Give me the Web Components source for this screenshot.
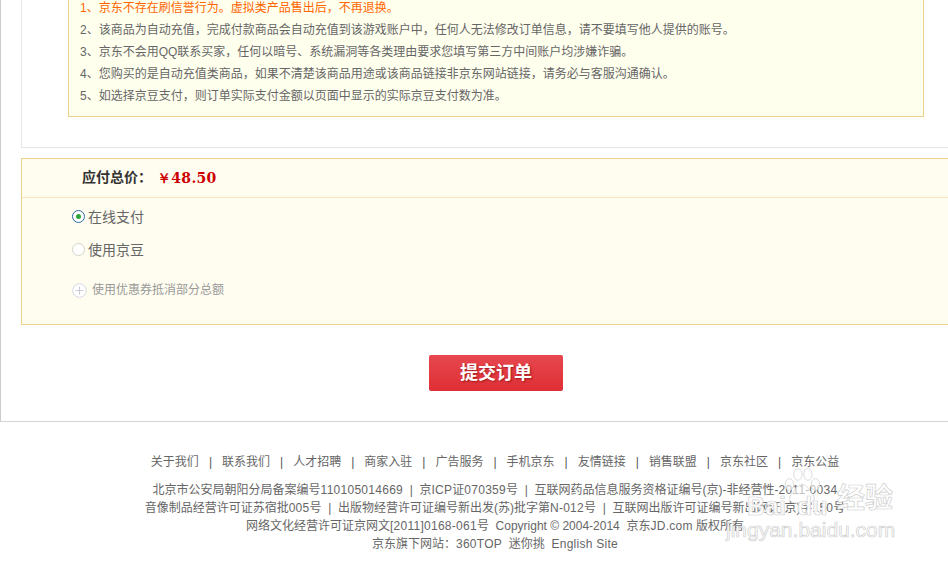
<!DOCTYPE html>
<html lang="zh">
<head>
<meta charset="utf-8">
<title>提交订单</title>
<style>
  html, body { margin: 0; padding: 0; background: #fff; overflow: hidden; }
  body { font: 12px/18px "Liberation Sans", "Noto Sans CJK SC", sans-serif; color: #666; height: 561px; }
</style>
</head>
<body>
<order-page>
  <notice-box slot="notice">
    <li class="warn">1、京东不存在刷信誉行为。虚拟类产品售出后，不再退换。</li>
    <li>2、该商品为自动充值，完成付款商品会自动充值到该游戏账户中，任何人无法修改订单信息，请不要填写他人提供的账号。</li>
    <li>3、京东不会用QQ联系买家，任何以暗号、系统漏洞等各类理由要求您填写第三方中间账户均涉嫌诈骗。</li>
    <li>4、您购买的是自动充值类商品，如果不清楚该商品用途或该商品链接非京东网站链接，请务必与客服沟通确认。</li>
    <li>5、如选择京豆支付，则订单实际支付金额以页面中显示的实际京豆支付数为准。</li>
  </notice-box>
  <pay-panel slot="pay" total="￥48.50"></pay-panel>
  <submit-button slot="submit">提交订单</submit-button>
</order-page>
<site-footer></site-footer>
<baidu-mark></baidu-mark>

<script>
// Top part of the page: frame with notice, payment panel and the button
class OrderPage extends HTMLElement {
  constructor() {
    super();
    this.attachShadow({ mode: 'open' });
    this.shadowRoot.innerHTML = `
      <style>
        :host { display: block; height: 425px; margin-top: -3px; box-sizing: border-box;
                border-left: 1px solid #ccc; border-bottom: 1px solid #d4d4d4; }
        .info { margin-left: 20px; height: 151px; box-sizing: border-box;
                border: 1px solid #e6e6e6; border-top: 0; border-right: 0; }
        .pay { margin: 10px 0 0 20px; }
        .submit { display: flex; justify-content: center; margin: 30px 0 0 43px; }
      </style>
      <div class="info"><slot name="notice"></slot></div>
      <div class="pay"><slot name="pay"></slot></div>
      <div class="submit"><slot name="submit"></slot></div>
    `;
  }
}

class NoticeBox extends HTMLElement {
  constructor() {
    super();
    this.attachShadow({ mode: 'open' });
    this.shadowRoot.innerHTML = `
      <style>
        :host { display: block; box-sizing: border-box; width: 856px; height: 120px; margin-left: 46px;
                padding-left: 11px; background: #ffffee; border: 1px solid #edd28b; border-top: 0;
                font-size: 12px; line-height: 22px; color: #666; }
        ::slotted(li) { display: block; white-space: nowrap; }
        ::slotted(.warn) { color: #ff6600; }
      </style>
      <slot></slot>
    `;
  }
}

// Payment panel: total row, radios and the coupon toggle
class PayPanel extends HTMLElement {
  constructor() {
    super();
    this.attachShadow({ mode: 'open' });
    this.shadowRoot.innerHTML = `
      <style>
        :host { display: block; box-sizing: border-box; height: 167px; background: #fffdf0;
                border: 1px solid #edd28b; border-right: 0; }
        .total { height: 39px; box-sizing: border-box; padding-left: 60px; display: flex; align-items: center;
                 border-bottom: 1px solid #f9e6bd; font-size: 14px; font-weight: bold; color: #333; }
        .label { position: relative; top: -1px; }
        .price { color: #cc0000; font: bold 14px "DejaVu Serif", serif; margin-left: 5px; letter-spacing: .3px; position: relative; top: 1px; }
        .body { padding: 2px 0 0 50px; }
        .radio { display: flex; align-items: center; height: 33px; font-size: 14px; color: #666; }
        .dot { width: 11px; height: 11px; border-radius: 50%; border: 1px solid #d6d3c8; background: #fff; margin-right: 3px; }
        .on { border-color: #2f6ba5; display: flex; align-items: center; justify-content: center; }
        .on::after { content: ""; width: 5px; height: 5px; border-radius: 50%; background: #2fa33c; }
        .coupon { display: flex; align-items: center; height: 18px; margin-top: 15px; color: #999; }
        .coupon svg { margin-right: 5px; }
      </style>
      <div class="total"><span class="label">应付总价：</span><span class="price"></span></div>
      <div class="body">
        <div class="radio"><span class="dot on"></span>在线支付</div>
        <div class="radio"><span class="dot"></span>使用京豆</div>
        <div class="coupon">
          <svg width="15" height="15" viewBox="0 0 15 15" fill="none">
            <circle cx="7.5" cy="7.5" r="6.8" fill="#fff" stroke="#d5d8e2"/>
            <path d="M7.5 3.5v8M3.5 7.5h8" stroke="#c9ccd6"/>
          </svg>使用优惠券抵消部分总额
        </div>
      </div>
    `;
  }
  connectedCallback() {
    this.shadowRoot.querySelector('.price').textContent = this.getAttribute('total');
  }
}

class SubmitButton extends HTMLElement {
  constructor() {
    super();
    this.attachShadow({ mode: 'open' });
    this.shadowRoot.innerHTML = `
      <style>
        :host { display: flex; align-items: center; justify-content: center; width: 134px; height: 36px;
                border-radius: 2px; background: linear-gradient(#e7474f, #df2f35);
                color: #fff; font-size: 18px; font-weight: bold; text-shadow: 1px 1px 2px rgba(110,0,0,.6); }
      </style>
      <slot></slot>
    `;
  }
}

class SiteFooter extends HTMLElement {
  constructor() {
    super();
    this.attachShadow({ mode: 'open' });
    const links = ['关于我们', '联系我们', '人才招聘', '商家入驻', '广告服务', '手机京东', '友情链接', '销售联盟', '京东社区', '京东公益'];
    this.shadowRoot.innerHTML = `
      <style>
        :host { display: block; padding: 31px 0 0 42px; text-align: center; color: #666; font-size: 12px; line-height: 18px; }
        nav { display: flex; justify-content: center; gap: 10px; height: 18px; margin-bottom: 10px; }
        nav i { font-style: normal; color: #555; }
        .rows div { white-space: nowrap; }
        b { font-weight: normal; letter-spacing: .27px; }
      </style>
      <nav>${links.map(l => `<span>${l}</span>`).join('<i>|</i>')}</nav>
      <div class="rows">
        <div>北京市公安局朝阳分局备案编号<b>110105014669</b>&nbsp;&nbsp;|&nbsp;&nbsp;京<b>ICP</b>证<b>070359</b>号&nbsp;&nbsp;|&nbsp;&nbsp;互联网药品信息服务资格证编号(京)-非经营性-<b>2011-0034</b></div>
        <div>音像制品经营许可证苏宿批<b>005</b>号&nbsp;&nbsp;|&nbsp;&nbsp;出版物经营许可证编号新出发(苏)批字第<b>N-012</b>号&nbsp;&nbsp;|&nbsp;&nbsp;互联网出版许可证编号新出网证(京)字<b>150</b>号</div>
        <div>网络文化经营许可证京网文<b>[2011]0168-061</b>号&nbsp;&nbsp;Copyright © 2004-2014&nbsp;&nbsp;京东<b>JD.com</b> 版权所有</div>
        <div>京东旗下网站：<b>360TOP</b>&nbsp;&nbsp;迷你挑&nbsp;&nbsp;<b>English Site</b></div>
      </div>
    `;
  }
}

// Baidu watermark sits over the footer
class BaiduMark extends HTMLElement {
  constructor() {
    super();
    this.attachShadow({ mode: 'open' });
    this.shadowRoot.innerHTML = `
      <style>
        :host { display: block; position: absolute; left: 725px; top: 458px; width: 180px; height: 86px;
                color: rgba(255,255,255,.92); font-family: "Liberation Sans", "Noto Sans CJK SC", sans-serif;
                -webkit-text-stroke: .7px #d0d0d0; font-weight: bold; }
        svg { position: absolute; left: 56px; top: 6px; }
        .bai { position: absolute; left: 22px; top: 33px; font-size: 25px; line-height: 30px; }
        .du { position: absolute; left: 72px; top: 33px; font-size: 25px; line-height: 30px; }
        .jy { position: absolute; left: 112px; top: 23px; font-size: 28px; line-height: 36px; }
        .url { position: absolute; left: 1px; top: 61px; font-size: 21px; line-height: 22px; font-weight: normal; white-space: nowrap; }
      </style>
      <svg width="42" height="46" viewBox="0 0 50 50" fill="rgba(255,255,255,.6)" stroke="#d4d4d4">
        <ellipse cx="10" cy="22" rx="5" ry="7"/>
        <ellipse cx="20" cy="10" rx="5" ry="7"/>
        <ellipse cx="32" cy="10" rx="5" ry="7"/>
        <ellipse cx="41" cy="22" rx="5" ry="7"/>
        <path d="M25 22c-6 0-9 8-13 12-4 5 0 11 6 10 4-1 10-1 14 0 6 1 10-5 6-10-4-4-7-12-13-12z"/>
      </svg>
      <span class="bai">Bai</span><span class="du">du</span><span class="jy">经验</span>
      <span class="url">jingyan.baidu.com</span>
    `;
  }
}

customElements.define('order-page', OrderPage);
customElements.define('notice-box', NoticeBox);
customElements.define('pay-panel', PayPanel);
customElements.define('submit-button', SubmitButton);
customElements.define('site-footer', SiteFooter);
customElements.define('baidu-mark', BaiduMark);
</script>
</body>
</html>
